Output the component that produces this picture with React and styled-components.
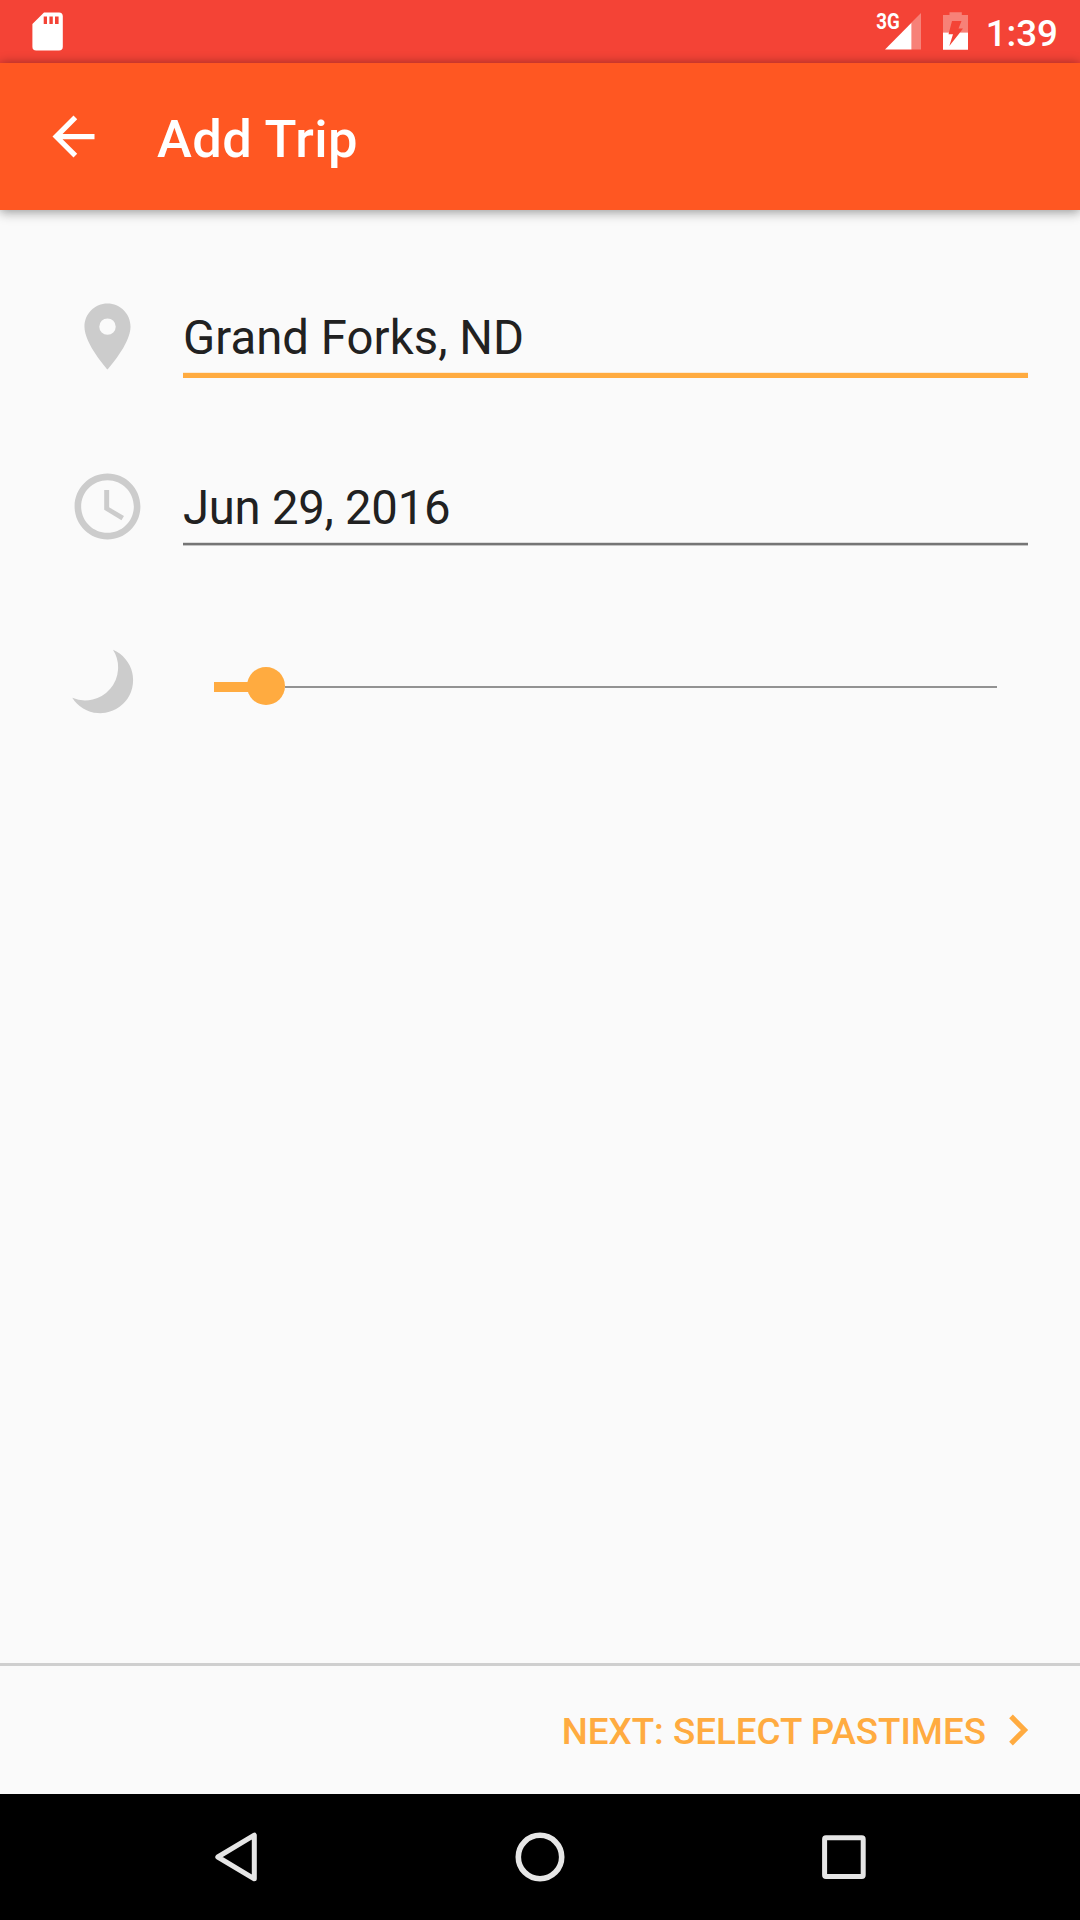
import React from 'react';
import styled, { createGlobalStyle } from 'styled-components';

const Global = createGlobalStyle`
  * { box-sizing: border-box; }
  body { margin: 0; background: #fafafa; font-family: Roboto, "Liberation Sans", sans-serif; }
  svg { display: block; flex: none; }
`;

const Screen = styled.div`
  width: 1080px;
  height: 1920px;
  display: flex;
  flex-direction: column;
  background: #fafafa;
  overflow: hidden;
`;

const StatusBar = styled.header`
  height: 63px;
  flex: none;
  display: flex;
  justify-content: space-between;
  align-items: flex-start;
  padding: 0 21px 0 32px;
  background: #f44336;
  color: #fff;
`;

const StatusGroup = styled.div`
  display: flex;
  align-items: flex-start;
`;

const SignalIcon = styled.svg`
  margin-right: 22px;
`;

const Clock = styled.time`
  margin-left: 18px;
  margin-right: 1px;
  padding-top: 12px;
  font-size: 36.75px;
  line-height: 44px;
  font-weight: 500;
`;

const AppBar = styled.div`
  position: relative;
  height: 147px;
  flex: none;
  display: flex;
  align-items: center;
  padding-left: 42px;
  background: #ff5722;
  color: #fff;
  box-shadow: 0 0 10px rgba(0, 0, 0, 0.34), 0 6px 10px rgba(0, 0, 0, 0.12);
`;

const Title = styled.h1`
  margin: 5px 0 0 52px;
  font-size: 52.5px;
  line-height: 62px;
  font-weight: 500;
  letter-spacing: 0.45px;
`;

const Form = styled.main`
  flex: 1;
  padding: 87px 52px 0 68px;
  display: flex;
  flex-direction: column;
`;

const Row = styled.div`
  height: 170px;
  display: flex;
  align-items: flex-start;
`;

const Field = styled.div`
  flex: 1;
  height: 82px;
  margin-left: 36px;
  display: flex;
  flex-direction: column;
`;

const FieldText = styled.div`
  height: 75px;
  padding-top: 13px;
  font-size: 47.25px;
  line-height: 56px;
  letter-spacing: ${(p) => p.$tracking}px;
  color: #212121;
  white-space: nowrap;
`;

const Underline = styled.div`
  height: ${(p) => (p.$active ? 6 : 4)}px;
  background: ${(p) =>
    p.$active
      ? 'linear-gradient(#fbebd6 1px, #ffab40 1px)'
      : 'linear-gradient(#dcdcdc 1px, #757575 1px 3px, #c4c4c4 3px)'};
`;

const Slider = styled.div`
  flex: 1;
  height: 38px;
  margin: 30px 31px 0 67px;
  display: flex;
  align-items: center;
`;

const Progress = styled.div`
  width: 36px;
  height: 10px;
  margin-top: 2px;
  background: #ffab40;
`;

const Thumb = styled.div`
  width: 38px;
  height: 38px;
  margin-left: -3px;
  border-radius: 50%;
  background: #ffab40;
`;

const Track = styled.div`
  flex: 1;
  height: 2px;
  margin-top: 2px;
  background: #929292;
`;

const Footer = styled.footer`
  height: 131px;
  flex: none;
  display: flex;
  justify-content: flex-end;
  align-items: flex-start;
  padding-right: 51px;
  border-top: 3px solid #cfcfcf;
`;

const NextButton = styled.button`
  display: flex;
  align-items: flex-start;
  gap: 23px;
  margin: 0;
  padding: 44px 0 0;
  border: 0;
  background: none;
  color: #ffab40;
  font: 500 36.75px/44px Roboto, "Liberation Sans", sans-serif;
  text-transform: uppercase;
`;

const Chevron = styled.svg`
  margin-top: 4px;
`;

const NavBar = styled.nav`
  height: 126px;
  flex: none;
  display: flex;
  align-items: center;
  gap: 239px;
  padding-left: 205px;
  background: #000;
`;

export default function App() {
  return (
    <Screen>
      <Global />
      <StatusBar>
        <svg width="31" height="63" viewBox="32 0 31 63" aria-hidden="true">
          <path fill="#fff" fillRule="evenodd" d="M44 12.5H59a3.8 3.8 0 0 1 3.8 3.8V46.7a3.8 3.8 0 0 1-3.8 3.8H36.2a3.8 3.8 0 0 1-3.8-3.8V24ZM43.7 16.5V24H47V16.5ZM49.4 16.5V24H52.8V16.5ZM55 16.5V24H58.6V16.5Z" />
        </svg>
        <StatusGroup>
          <SignalIcon width="45" height="63" viewBox="876 0 45 63" aria-hidden="true">
            <path fill="#fff" fillOpacity=".33" d="M911.5 22.5 921 13V49.5H911.5Z" />
            <path fill="#fff" d="M885 49.5 911.5 22.8V49.5Z" />
            <text x="876.3" y="29" fill="#fff" fontFamily="Roboto, sans-serif" fontSize="21.5" fontWeight="700" textLength="23.5" lengthAdjust="spacingAndGlyphs">3G</text>
          </SignalIcon>
          <svg width="25" height="63" viewBox="943 0 25 63" aria-hidden="true">
            <path fill="#fff" fillOpacity=".33" d="M949.5 12.3H961.8V15H968V32.5H960L963 28.5H958.5L961.5 21H952L949 32.5H943V15H949.5Z" />
            <path fill="#fff" d="M943 32.5H949L948.5 34.3H953L949.3 46 960 32.5H968V49.8H943Z" />
          </svg>
          <Clock>1:39</Clock>
        </StatusGroup>
      </StatusBar>
      <AppBar>
        <svg width="63" height="63" viewBox="0 0 24 24" fill="#fff" aria-label="Back">
          <path d="M20 11H7.83l5.59-5.59L12 4l-8 8 8 8 1.41-1.41L7.83 13H20v-2z" />
        </svg>
        <Title>Add Trip</Title>
      </AppBar>
      <Form>
        <Row>
          <svg width="79" height="79" viewBox="0 0 24 24" fill="#ccc" aria-hidden="true">
            <path d="M12 2C8.13 2 5 5.13 5 9c0 5.25 7 13 7 13s7-7.75 7-13c0-3.87-3.13-7-7-7zm0 9.5a2.5 2.5 0 0 1 0-5 2.5 2.5 0 0 1 0 5z" />
          </svg>
          <Field>
            <FieldText $tracking={0.07}>Grand Forks, ND</FieldText>
            <Underline $active />
          </Field>
        </Row>
        <Row>
          <svg width="79" height="79" viewBox="0 0 24 24" fill="#ccc" aria-hidden="true">
            <path d="M11.99 2C6.47 2 2 6.48 2 12s4.47 10 9.99 10C17.52 22 22 17.52 22 12S17.52 2 11.99 2zM12 20c-4.42 0-8-3.58-8-8s3.58-8 8-8 8 3.58 8 8-3.58 8-8 8zm.5-13H11v6l5.25 3.15.75-1.23-4.5-2.67z" />
          </svg>
          <Field>
            <FieldText $tracking={-0.25}>Jun 29, 2016</FieldText>
            <Underline />
          </Field>
        </Row>
        <Row>
          <svg width="79" height="79" viewBox="68 637 79 79" fill="#ccc" aria-hidden="true">
            <path d="M113 649.8A33 33 0 1 1 72.2 697.8A33 33 0 0 0 113 649.8Z" />
          </svg>
          <Slider>
            <Progress />
            <Thumb />
            <Track />
          </Slider>
        </Row>
      </Form>
      <Footer>
        <NextButton>
          Next: Select Pastimes
          <Chevron width="20" height="33" viewBox="0 0 20 33" fill="none" stroke="#ffab40" strokeWidth="5.2">
            <path d="M2 2.4 15.5 16 2 29.6" />
          </Chevron>
        </NextButton>
      </Footer>
      <NavBar>
        <svg width="64" height="64" viewBox="205 1825 64 64" fill="none" stroke="#e6e6e6" strokeWidth="5" strokeLinejoin="round">
          <path d="M217.8 1857 254.3 1835.2V1878.8Z" />
        </svg>
        <svg width="64" height="64" viewBox="508 1825 64 64" fill="none" stroke="#e6e6e6" strokeWidth="5.6">
          <circle cx="540" cy="1857" r="21.7" />
        </svg>
        <svg width="64" height="64" viewBox="811 1825 64 64" fill="none" stroke="#e6e6e6" strokeWidth="5">
          <rect x="824.6" y="1837.8" width="38.6" height="38.6" rx="1.4" />
        </svg>
      </NavBar>
    </Screen>
  );
}
